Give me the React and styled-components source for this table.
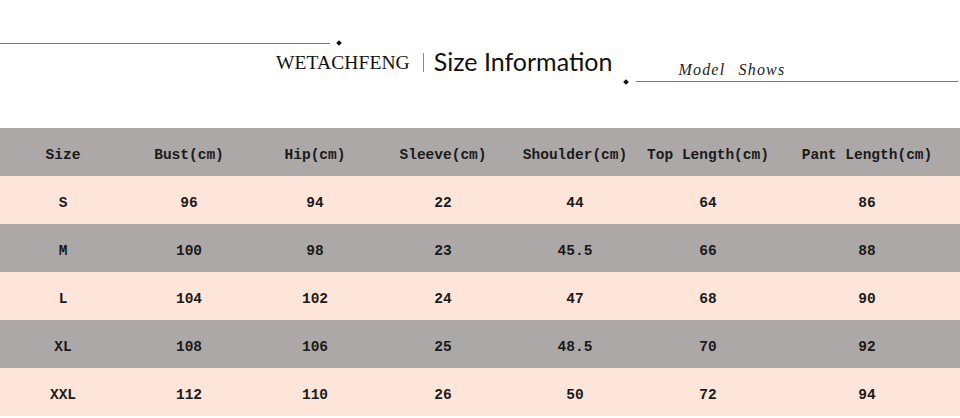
import styled, { createGlobalStyle } from "styled-components";

const GlobalStyle = createGlobalStyle`
    html, body {
        margin: 0;
        padding: 0;
        background: #ffffff;
    }
`

const columns = [
    { label: 'Size', width: 126 },
    { label: 'Bust(cm)', width: 126 },
    { label: 'Hip(cm)', width: 126 },
    { label: 'Sleeve(cm)', width: 130 },
    { label: 'Shoulder(cm)', width: 134 },
    { label: 'Top Length(cm)', width: 132 },
    { label: 'Pant Length(cm)', width: 186 },
]

const sizes = [
    ['S', '96', '94', '22', '44', '64', '86'],
    ['M', '100', '98', '23', '45.5', '66', '88'],
    ['L', '104', '102', '24', '47', '68', '90'],
    ['XL', '108', '106', '25', '48.5', '70', '92'],
    ['XXL', '112', '110', '26', '50', '72', '94'],
]

export default function App(){
    return(
        <Page>
            <GlobalStyle />
            <Header>
                <LeftRule />
                <Title>
                    <Brand>WETACHFENG</Brand>
                    <Divider />
                    <Heading>Size Information</Heading>
                </Title>
                <RightDeco>
                    <Script>Model Shows</Script>
                    <RightRule />
                </RightDeco>
            </Header>
            <SizeTable>
                <colgroup>
                    {columns.map(col => <col key={col.label} style={{width: col.width}} />)}
                </colgroup>
                <thead>
                    <Row $tone="gray">
                        {columns.map(col => <Cell as="th" key={col.label}>{col.label}</Cell>)}
                    </Row>
                </thead>
                <tbody>
                    {sizes.map((row, i) => (
                        <Row key={row[0]} $tone={i % 2 === 0 ? 'pink' : 'gray'}>
                            {row.map((value, j) => <Cell key={j}>{value}</Cell>)}
                        </Row>
                    ))}
                </tbody>
            </SizeTable>
        </Page>
    )
}

const Page = styled.div`
    width: 960px;
    height: 418px;
    overflow: hidden;
    background: #ffffff;
`

const Header = styled.header`
    display: flex;
    align-items: flex-start;
    height: 128px;
`

const Diamond = `
    content: '';
    position: absolute;
    width: 4px;
    height: 4px;
    background: #111;
    transform: rotate(45deg);
`

const LeftRule = styled.div`
    position: relative;
    flex: 0 0 330px;
    height: 1px;
    margin-top: 43px;
    background: #7a7a7a;
    &::after {
        ${Diamond}
        right: -11px;
        top: -2px;
    }
`

const Title = styled.div`
    display: flex;
    align-items: center;
    margin-left: -54px;
    margin-top: 46px;
`

const Brand = styled.span`
    font-family: "Liberation Serif", serif;
    font-size: 19.5px;
    color: #111;
    letter-spacing: 0.1px;
    padding-top: 3px;
`

const Divider = styled.span`
    width: 1px;
    height: 19px;
    margin: 2px 10px 0 13px;
    background: #8a8a8a;
`

const Heading = styled.h1`
    margin: 0;
    font-family: Lato, sans-serif;
    font-weight: 400;
    font-size: 25px;
    color: #111;
`

const RightDeco = styled.div`
    flex: 1;
    display: flex;
    flex-direction: column;
    margin: 62px 2px 0 12px;
`

const Script = styled.span`
    margin-left: 54px;
    font-family: "Liberation Serif", serif;
    font-style: italic;
    font-size: 16px;
    line-height: 16px;
    letter-spacing: 1.2px;
    word-spacing: 8px;
    color: #222;
`

const RightRule = styled.div`
    position: relative;
    height: 1px;
    margin: 3px 0 0 12px;
    background: #7a7a7a;
    &::before {
        ${Diamond}
        left: -12px;
        top: -1px;
    }
`

const SizeTable = styled.table`
    width: 960px;
    table-layout: fixed;
    border-collapse: collapse;
`

const Row = styled.tr`
    height: 48px;
    background: ${props => props.$tone === 'gray' ? '#aba8a7' : '#fde5da'};
`

const Cell = styled.td`
    padding: 5px 0 0;
    text-align: center;
    font-family: "Liberation Mono", monospace;
    font-size: 14.5px;
    font-weight: 700;
    color: #1a1a1a;
    white-space: nowrap;
`
